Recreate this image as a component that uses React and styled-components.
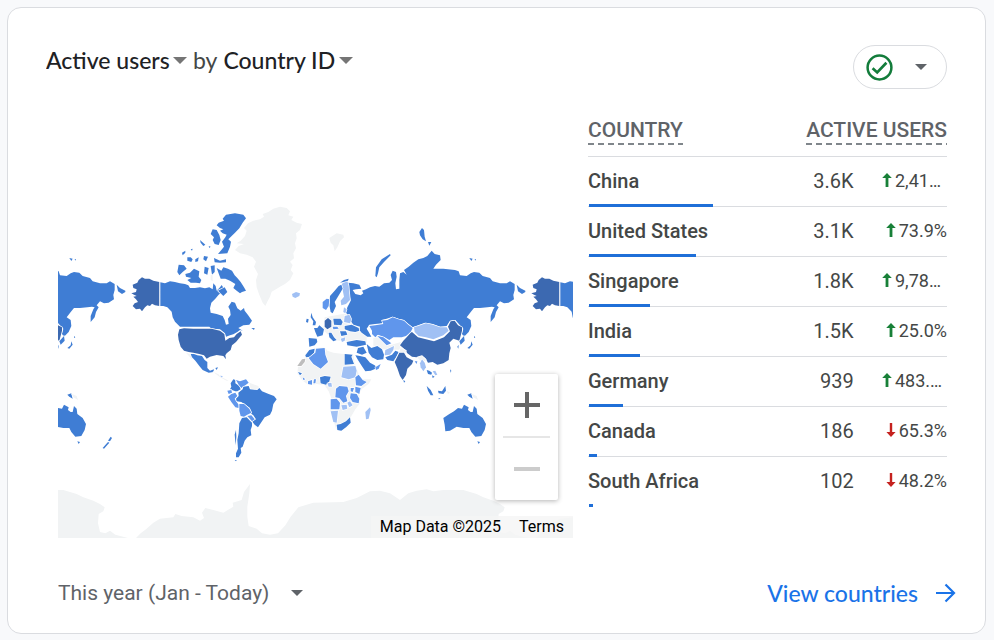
import React from 'react'
import styled, { createGlobalStyle } from 'styled-components'

const colors = {
  page: '#f8f9fb',
  white: '#ffffff',
  border: '#dadce0',
  ink: '#202124',
  text: '#444746',
  gray: '#5f6368',
  caret: '#757575',
  blue: '#1a73e8',
  bar: '#1f6fd8',
  green: '#188038',
  red: '#c5221f',
}

// map fills, from most users to none
const shades = {
  top: '#3c69b1',
  high: '#3f7dd4',
  mid: '#6096ec',
  low: '#a0c0f4',
  none: '#f1f3f4',
  unknown: '#bdbdbd',
}

const GlobalStyle = createGlobalStyle`
  *, *::before, *::after { box-sizing: border-box; }
  body {
    margin: 0;
    background-color: ${colors.page};
    font-family: Roboto, 'Liberation Sans', sans-serif;
    color: ${colors.text};
  }
`

const Page = styled.main`
  padding: 7px 8px 5px 7px;
`

const Card = styled.section`
  background-color: ${colors.white};
  border: 1px solid ${colors.border};
  border-radius: 14px;
  padding: 37px 29px 22px 38px;
`

const CardHeader = styled.header`
  display: flex;
  align-items: flex-start;
  justify-content: space-between;
  padding-right: 9px;
`

const Title = styled.h2`
  display: flex;
  align-items: center;
  gap: 6px;
  margin: 0;
  font-family: Lato, Roboto, sans-serif;
  font-size: 23px;
  font-weight: 400;
  line-height: 30px;
`

const Picker = styled.span`
  display: inline-flex;
  align-items: center;
  gap: ${(props) => props.$gap}px;
`

const Select = styled.select`
  appearance: none;
  border: 0;
  padding: 0;
  margin: 0;
  background: transparent;
  color: ${(props) => props.$color};
  font: inherit;
  font-weight: ${(props) => props.$weight || 400};
  line-height: inherit;
  cursor: pointer;
`

const StatusButton = styled.button`
  display: flex;
  align-items: center;
  justify-content: space-between;
  width: 94px;
  height: 44px;
  padding: 0 19px 0 12px;
  border: 1px solid ${colors.border};
  border-radius: 22px;
  background-color: ${colors.white};
  cursor: pointer;
`

const CardBody = styled.div`
  display: grid;
  grid-template-columns: minmax(0, 1fr) 359px;
  gap: 15px;
  align-items: start;
  padding: 21px 9px 0 12px;
`

const MapFrame = styled.div`
  position: relative;
  height: 428px;
  overflow: hidden;
`

const MapSvg = styled.svg`
  display: block;
  width: 100%;
  height: 100%;
`

const ZoomControl = styled.div`
  position: absolute;
  right: 15px;
  bottom: 38px;
  display: flex;
  flex-direction: column;
  align-items: center;
  width: 63px;
  background-color: ${colors.white};
  border-radius: 2px;
  box-shadow: 0 1px 5px rgba(0, 0, 0, 0.3);
`

const ZoomButton = styled.button`
  display: flex;
  align-items: center;
  justify-content: center;
  width: 100%;
  height: 62px;
  padding: 0;
  border: 0;
  background: transparent;
  color: ${(props) => (props.disabled ? '#cccccc' : '#666666')};
`

const ZoomDivider = styled.div`
  width: 47px;
  height: 2px;
  background-color: #e6e6e6;
`

const Attribution = styled.div`
  position: absolute;
  right: 0;
  bottom: 0;
  display: flex;
  color: #000000;
  font-size: 16px;
  line-height: 22px;
`

const AttributionItem = styled.span`
  padding: 0 9px;
  background-color: rgba(245, 245, 245, 0.8);
`

const TermsLink = styled.a`
  color: inherit;
  text-decoration: none;
`

const Table = styled.table`
  width: 100%;
  table-layout: fixed;
  border-spacing: 0;
  font-size: 20px;
`

const HeadCell = styled.th`
  height: 47px;
  padding: 8px 0 0;
  border-bottom: 1px solid ${colors.border};
  color: ${colors.gray};
  font-size: 21px;
  font-weight: 500;
  line-height: 24px;
  text-align: ${(props) => props.$align || 'left'};
  vertical-align: top;
`

const HeadLabel = styled.span`
  display: inline-block;
  padding-bottom: 3px;
  background: repeating-linear-gradient(90deg, #80868b 0 6px, transparent 6px 10px) left bottom / 100% 2px no-repeat;
`

const Cell = styled.td`
  height: 50px;
  padding: 0 0 2px;
  border-bottom: 1px solid ${(props) => (props.$last ? 'transparent' : colors.border)};
  text-align: right;
`

const CountryCell = styled(Cell).attrs({ as: 'th', scope: 'row' })`
  position: relative;
  font-weight: 500;
  text-align: left;
`

const Bar = styled.div`
  position: absolute;
  left: 1px;
  bottom: -1px;
  height: 3px;
  background-color: ${colors.bar};
`

const Change = styled.span`
  display: flex;
  align-items: center;
  justify-content: flex-end;
  gap: 3px;
  font-size: 18px;
`

const ChangeValue = styled.span`
  min-width: ${(props) => (props.$wide ? 52 : 0)}px;
  text-align: left;
`

const CardFooter = styled.footer`
  display: flex;
  align-items: center;
  justify-content: space-between;
  height: 36px;
  margin-top: 37px;
  padding-left: 12px;
  font-size: 21px;
`

const MoreLink = styled.a`
  display: flex;
  align-items: center;
  gap: 17px;
  color: ${colors.blue};
  font-family: Lato, Roboto, sans-serif;
  font-size: 23px;
  font-weight: 500;
  text-decoration: none;
`

const Caret = ({ width = 14, height = 7, color = colors.caret }) => (
  <svg width={width} height={height} viewBox='0 0 14 7' preserveAspectRatio='none' aria-hidden='true'>
    <path d='M0 0H14L7 7Z' fill={color} />
  </svg>
)

const CheckIcon = () => (
  <svg width='27' height='27' viewBox='0 0 27 27' fill='none' stroke='#137c3b' aria-hidden='true'>
    <circle cx='13.5' cy='13.5' r='11.9' strokeWidth='2.5' />
    <path d='M6.6 14.2L11.2 18.4L20.4 8.8' strokeWidth='2.7' />
  </svg>
)

const TrendIcon = ({ up }) => (
  <svg width='10' height='15' viewBox='0 0 10 15' aria-hidden='true'>
    <path
      d={up ? 'M5 0L9.8 5H6.4V14H3.6V5H.2Z' : 'M5 14L.4 9H3.8V0H6.2V9H9.6Z'}
      fill={up ? colors.green : colors.red}
    />
  </svg>
)

const ArrowIcon = () => (
  <svg width='21' height='20' viewBox='0 0 21 20' fill='none' stroke='currentColor' strokeWidth='2.2' aria-hidden='true'>
    <path d='M1 10H19M10.5 1.5L19 10L10.5 18.5' />
  </svg>
)

// Every sheet has its own origin on the map and is plotted at three units per pixel.
// A shape is [shade, points].
const SHEETS = [
  {
    x: 120,
    y: 200,
    shapes: [
      ['none', '384,70 400,62 420,58 432,50 428,42 445,36 460,26 480,20 500,24 510,34 505,46 520,50 514,60 530,68 546,72 540,90 528,100 530,115 525,130 528,145 520,160 522,175 510,185 518,195 512,210 520,220 510,240 495,252 480,260 468,268 455,275 450,290 442,305 436,318 428,308 418,285 410,262 408,240 414,222 402,200 408,185 398,172 380,164 360,160 345,150 356,138 372,132 350,130 362,122 375,108 380,92 372,84'],
      ['top', '66,232 75,236 88,236 100,242 118,246 118,318 105,316 96,311 90,318 82,316 75,322 66,334 60,326 48,328 38,318 44,310 54,306 48,298 40,290 50,288 42,284 34,280 48,276 50,268 40,264 38,254 52,248 56,240'],
      ['high', '121,247 135,250 150,244 165,246 180,250 195,252 205,256 210,264 225,264 240,262 255,265 268,262 278,268 280,250 287,258 290,272 300,262 305,255 312,266 306,276 296,284 286,296 274,308 270,325 272,338 290,342 308,348 314,360 318,374 326,372 324,356 332,345 330,330 325,320 335,305 345,308 352,325 362,332 372,324 374,332 384,345 396,362 388,374 370,376 355,384 368,392 360,390 352,396 340,403 330,406 318,410 315,400 300,388 275,386 268,380 180,380 165,365 158,352 155,335 142,322 130,318 121,318'],
      ['high', '318,44 345,40 370,44 378,55 368,68 358,85 345,98 335,108 325,118 333,125 330,140 322,160 294,162 304,150 312,140 306,125 316,112 320,104 308,100 300,92 310,88 300,84 290,76 296,68 312,62 308,56'],
      ['high', '278,88 290,90 298,105 302,120 296,135 284,132 278,120 282,112 272,102'],
      ['high', '282,174 300,182 318,178 318,187 300,188 284,187'],
      ['high', '196,222 210,218 222,206 238,214 236,230 244,240 240,250 228,248 212,248 202,240 214,234 198,230'],
      ['high', '176,194 192,196 200,206 188,216 178,226 172,216'],
      ['high', '202,172 212,172 218,178 214,186 202,182'],
      ['high', '226,178 236,172 234,184 226,186'],
      ['high', '186,158 196,152 196,158 188,166'],
      ['high', '212,148 218,146 216,152'],
      ['high', '240,120 256,134 250,138 242,128'],
      ['high', '252,168 264,170 258,184 250,178'],
      ['high', '266,138 272,140 268,144'],
      ['high', '254,200 266,204 262,224 252,220'],
      ['high', '272,198 284,196 284,216 276,224'],
      ['none', '272,224 278,226 278,244 272,240'],
      ['high', '290,204 304,212 310,202 324,206 336,212 344,226 352,234 362,246 372,262 378,272 366,276 360,280 350,272 340,264 346,252 330,242 316,236 302,236 298,226'],
      ['high', '294,272 314,262 322,276 310,288'],
      ['high', '394,384 404,384 402,390'],
      ['low', '516,282 528,276 540,280 538,288 526,294 518,290'],
    ],
  },
  {
    x: 170,
    y: 320,
    shapes: [
      ['top', '28,28 42,25 70,26 95,26 125,26 150,32 163,42 166,62 178,54 192,52 200,42 212,34 216,44 206,56 198,66 186,76 182,90 170,100 166,106 168,118 160,108 140,105 120,110 110,116 102,106 88,102 70,98 56,96 42,92 32,80 26,60 24,44'],
      ['none', '48,98 60,102 72,118 64,116'],
      ['high', '62,102 72,102 82,106 96,108 104,120 112,126 112,144 120,152 132,148 130,156 116,158 98,150 88,138 76,122 66,112'],
      ['high', '136,144 144,142 140,150'],
      ['none', '130,156 144,162 160,174 176,182 170,182 150,172'],
      ['low', '150,167 158,168 156,173'],
      ['none', '238,188 265,198 268,208 242,206'],
      ['high', '182,190 190,178 196,180 196,190 208,198 212,208 202,214 196,214 180,208 184,200'],
      ['mid', '198,180 210,184 228,178 236,188 226,196 214,204 206,194'],
      ['mid', '172,212 184,210 186,218 176,222'],
      ['mid', '184,222 196,218 202,228 194,236 200,246 206,254 206,264 196,262 184,246 174,230'],
      ['high', '205,218 218,208 220,200 236,198 240,208 262,210 268,204 276,214 296,222 312,228 320,238 310,252 306,272 300,284 284,292 272,310 264,322 254,314 246,304 258,298 250,286 242,280 240,264 226,254 214,246 200,244 198,236 206,228'],
      ['mid', '208,252 222,252 238,266 244,278 232,284 222,290 212,288 208,272'],
      ['mid', '232,288 244,286 254,298 246,304'],
      ['high', '216,294 230,292 240,302 246,308 246,318 242,330 244,346 232,352 224,362 218,380 212,384 214,398 206,412 198,412 198,400 204,386 202,360 206,340 208,310'],
      ['high', '194,344 198,330 199,350 197,376'],
      ['high', '194,420 200,420 198,424'],
    ],
  },
  {
    x: 290,
    y: 230,
    shapes: [
      ['none', '118,24 140,10 160,14 162,22 150,34 142,52 134,64 130,46 122,38'],
      ['none', '104,262 170,250 230,300 230,340 130,330 100,300'],
      ['high', '174,158 190,160 208,164 214,176 198,178 188,180 196,192 212,196 220,190 216,182 228,178 240,172 255,168 268,170 282,160 298,158 306,150 302,135 308,122 318,126 320,140 316,160 318,178 328,176 328,150 330,130 340,126 350,134 342,120 356,110 370,98 385,88 400,84 412,78 425,62 434,72 450,76 452,90 438,104 430,116 460,116 495,120 506,124 510,136 530,138 542,130 552,126 568,128 578,138 600,144 608,154 630,160 650,160 660,154 674,162 674,180 670,195 672,208 656,218 642,220 630,214 620,226 626,232 618,246 614,262 602,276 602,258 610,238 614,232 606,230 592,232 570,234 552,234 544,244 530,262 542,270 544,288 536,306 522,320 516,312 520,296 510,286 496,270 480,272 470,288 450,290 425,282 405,278 380,288 368,292 355,282 340,270 325,266 308,260 290,266 275,270 278,280 255,282 238,284 230,296 236,306 244,320 232,320 215,308 208,300 210,290 190,284 182,272 178,260 168,248 172,232 176,224 182,212 178,190 176,170'],
      ['high', '680,164 690,174 706,182 706,186 696,192 684,184'],
      ['high', '256,138 258,112 275,88 300,72 302,76 282,96 268,112 264,130 260,142'],
      ['high', '388,6 396,-6 402,0 404,20 408,34 398,28 390,16'],
      ['high', '414,36 424,36 418,47'],
      ['high', '538,84 548,86 544,93'],
      ['high', '554,87 558,88 556,92'],
      ['low', '160,156 172,152 176,168 178,190 180,210 168,222 154,226 152,212 162,200 158,180 154,166'],
      ['high', '154,164 158,176 150,190 140,206 134,216 138,228 128,250 122,246 118,225 120,198 134,182 146,168'],
      ['mid', '98,216 110,206 118,208 116,228 108,240 98,234'],
      ['high', '150,158 162,150 176,146 174,152 160,156'],
      ['low', '162,232 170,238 166,250 160,246'],
      ['low', '164,258 178,254 184,268 180,280 162,276'],
      ['top', '104,272 114,264 124,272 124,290 112,298 104,290'],
      ['high', '130,266 152,266 158,276 154,286 132,284'],
      ['high', '164,288 185,284 206,294 208,302 196,306 180,304 164,298'],
      ['high', '72,294 82,294 88,286 102,298 98,316 82,320 76,306'],
      ['high', '56,324 80,326 82,336 74,346 58,350'],
      ['high', '64,248 68,262 78,276 76,286 68,286 70,274 62,262'],
      ['high', '50,266 56,268 54,278 48,276'],
      ['high', '116,308 124,308 132,322 140,330 130,334 118,322'],
      ['mid', '128,290 142,290 146,296 130,298'],
      ['high', '150,304 168,304 172,314 154,318'],
      ['low', '152,326 166,322 164,332 156,336'],
      ['high', '170,336 200,330 226,334 228,344 200,350 172,346'],
      ['none', '250,324 262,322 300,346 340,334 340,360 250,356'],
      ['mid', '238,288 256,286 280,282 276,272 292,270 308,262 325,268 342,272 355,284 368,294 362,306 348,318 335,322 310,322 298,330 284,322 264,314 256,322 246,312 246,302'],
      ['mid', '262,318 280,322 296,334 304,340 290,346 274,330'],
      ['low', '372,292 385,288 408,280 428,284 450,292 470,292 476,302 460,316 430,328 408,322 386,318 374,306'],
      ['top', '366,306 384,322 408,328 432,334 462,322 480,304 474,290 482,274 494,272 504,286 516,292 516,302 508,332 490,326 478,338 482,354 478,370 476,390 460,400 442,404 428,396 414,398 406,384 396,378 380,382 366,380 352,370 344,358 330,346 340,332 350,322 362,308'],
      ['high', '522,318 508,334 512,344 524,332'],
      ['high', '544,334 548,344 538,356 532,354 542,346'],
      ['high', '502,350 506,344 505,356'],
      ['high', '552,318 556,322 552,324'],
    ],
  },
  {
    x: 290,
    y: 320,
    shapes: [
      ['none', '46,110 74,84 104,82 112,92 130,98 160,102 190,106 194,130 206,162 216,178 244,178 236,192 216,206 208,222 210,250 196,268 182,292 176,318 150,334 138,326 130,300 120,270 126,240 116,214 104,196 80,192 56,196 36,180 22,160 24,140'],
      ['high', '46,106 58,90 74,86 72,98 60,110 48,112'],
      ['unknown', '22,138 36,118 46,116 44,126 34,138'],
      ['mid', '56,114 76,98 78,86 104,84 106,104 114,126 92,146 70,132'],
      ['high', '164,102 188,104 184,110 192,132 164,134'],
      ['low', '160,140 196,138 200,152 196,172 176,178 154,172'],
      ['mid', '196,172 206,164 218,180 230,186 214,198 198,196'],
      ['high', '90,172 104,168 122,170 118,184 108,194 92,190'],
      ['low', '112,190 124,188 126,200 116,200'],
      ['mid', '138,206 148,198 172,200 176,214 168,228 172,244 160,248 148,234 136,232'],
      ['mid', '196,200 212,204 208,222 196,216'],
      ['mid', '182,204 192,204 188,216 182,214'],
      ['mid', '182,220 200,222 208,236 206,250 188,246 180,234'],
      ['mid', '122,238 140,236 150,248 148,268 122,268'],
      ['low', '154,256 170,254 172,266 158,270'],
      ['low', '172,248 180,244 188,256 178,262'],
      ['low', '122,274 144,272 142,290 140,308 130,306'],
      ['high', '140,314 152,312 168,304 180,292 182,308 168,322 154,332 142,330'],
      ['low', '226,276 240,262 242,270 236,296 228,298'],
      ['mid', '54,184 66,180 66,194 54,192'],
      ['mid', '72,178 78,178 76,190 70,190'],
      ['high', '24,156 36,160 30,166'],
      ['mid', '38,172 46,178 40,180'],
      ['high', '196,106 210,108 226,112 240,128 254,136 262,144 242,152 226,154 214,136 204,120'],
      ['mid', '256,142 272,132 266,146 258,150'],
      ['high', '204,84 220,80 230,98 216,104 200,98'],
      ['high', '230,72 244,84 262,78 276,88 282,104 280,118 262,120 246,112 236,98'],
      ['low', '286,90 312,78 310,90 300,104 284,106'],
      ['high', '286,112 306,104 316,92 326,96 318,112 310,124 292,120'],
      ['none', '332,84 348,92 346,102 328,96'],
      ['top', '322,110 328,98 342,98 350,112 370,122 366,132 352,146 348,165 338,180 330,168 322,145 314,126'],
      ['mid', '374,124 382,124 380,132'],
      ['none', '382,112 396,108 408,120 396,128'],
      ['low', '396,118 404,128 408,142 400,154 392,142 390,130'],
      ['high', '340,180 346,184 342,188'],
    ],
  },
  {
    x: 400,
    y: 330,
    shapes: [
      ['high', '80,120 88,122 96,128 94,134 84,132'],
      ['high', '96,136 104,140 98,144'],
      ['low', '98,124 106,122 112,134 106,136'],
      ['high', '80,168 92,180 100,196 92,196 84,182'],
      ['high', '114,182 126,184 136,168 138,182 130,192 116,190'],
      ['none', '140,182 150,188 144,192'],
      ['high', '150,118 154,122 152,128'],
      ['high', '116,204 122,206 116,208'],
      ['high', '202,194 214,190 218,206 208,200'],
      ['none', '216,192 230,198 234,210 220,202'],
      ['high', '130,264 148,252 162,244 174,234 186,236 192,224 206,232 204,240 212,246 218,246 222,228 230,236 232,252 248,264 258,282 254,300 244,318 226,320 214,306 208,294 190,294 170,290 150,302 136,304 134,284'],
      ['high', '232,334 240,336 236,342'],
      ['high', '332,320 336,324 330,334 324,332'],
      ['high', '324,336 328,338 312,356 308,354'],
    ],
  },
  {
    x: 50,
    y: 470,
    shapes: [
      ['none', '258,204 272,190 288,178 310,158 330,146 370,142 376,132 395,138 430,142 450,152 462,144 456,128 466,114 490,120 520,128 550,110 548,98 575,90 582,66 600,42 598,70 592,110 592,140 596,168 620,176 636,190 660,194 684,190 706,166 722,140 745,112 790,98 880,96 920,84 960,64 990,62 1020,70 1050,90 1075,70 1100,62 1130,58 1150,64 1180,60 1240,60 1260,66 1280,72 1300,82 1330,92 1350,102 1364,112 1360,124 1346,132 1344,160 1350,186 1366,190 1380,182 1396,194 1434,204'],
    ],
  },
]

const MAP_PERIOD = 400

// the stroke lies under each fill, so a border only cuts into the neighbours
const World = () => (
  <g id='world' stroke={colors.white} strokeWidth='4' strokeLinejoin='round' paintOrder='stroke'>
    {SHEETS.map((sheet) => (
      <g key={`${sheet.x}-${sheet.y}`} transform={`translate(${sheet.x} ${sheet.y}) scale(0.33333)`}>
        {sheet.shapes.map(([shade, points]) => (
          <polygon key={points} points={points} fill={shades[shade]} />
        ))}
      </g>
    ))}
  </g>
)

const WorldMap = () => (
  <MapFrame>
    <MapSvg viewBox='58 110 515 428' preserveAspectRatio='xMidYMax slice' role='img' aria-label='Active users by country'>
      <World />
      <use href='#world' x={-MAP_PERIOD} />
      <use href='#world' x={MAP_PERIOD} />
    </MapSvg>
    <ZoomControl>
      <ZoomButton type='button' aria-label='Zoom in'>
        <svg width='26' height='26' viewBox='0 0 26 26' aria-hidden='true'>
          <path d='M11 0H15V11H26V15H15V26H11V15H0V11H11Z' fill='currentColor' />
        </svg>
      </ZoomButton>
      <ZoomDivider />
      <ZoomButton type='button' aria-label='Zoom out' disabled>
        <svg width='26' height='4' viewBox='0 0 26 4' aria-hidden='true'>
          <path d='M0 0H26V4H0Z' fill='currentColor' />
        </svg>
      </ZoomButton>
    </ZoomControl>
    <Attribution>
      <AttributionItem>Map Data ©2025</AttributionItem>
      <AttributionItem><TermsLink href='#terms'>Terms</TermsLink></AttributionItem>
    </Attribution>
  </MapFrame>
)

const ROWS = [
  { country: 'China', users: '3.6K', up: true, change: '2,41…', share: 63 },
  { country: 'United States', users: '3.1K', up: true, change: '73.9%', share: 54 },
  { country: 'Singapore', users: '1.8K', up: true, change: '9,78…', share: 31 },
  { country: 'India', users: '1.5K', up: true, change: '25.0%', share: 26 },
  { country: 'Germany', users: '939', up: true, change: '483.…', share: 17 },
  { country: 'Canada', users: '186', up: false, change: '65.3%', share: 4 },
  { country: 'South Africa', users: '102', up: false, change: '48.2%', share: 2 },
]

const CountryTable = () => (
  <Table>
    <colgroup>
      <col style={{ width: '55%' }} />
      <col style={{ width: '19%' }} />
      <col style={{ width: '26%' }} />
    </colgroup>
    <thead>
      <tr>
        <HeadCell scope='col'><HeadLabel>COUNTRY</HeadLabel></HeadCell>
        <HeadCell scope='colgroup' colSpan={2} $align='right'><HeadLabel>ACTIVE USERS</HeadLabel></HeadCell>
      </tr>
    </thead>
    <tbody>
      {ROWS.map((row, index) => {
        const last = index === ROWS.length - 1
        return (
          <tr key={row.country}>
            <CountryCell $last={last}>
              {row.country}
              <Bar style={{ width: `${row.share}%` }} />
            </CountryCell>
            <Cell $last={last}>{row.users}</Cell>
            <Cell $last={last}>
              <Change>
                <TrendIcon up={row.up} />
                <ChangeValue $wide={row.change.endsWith('…')}>{row.change}</ChangeValue>
              </Change>
            </Cell>
          </tr>
        )
      })}
    </tbody>
  </Table>
)

export default function App() {
  return (
    <Page>
      <GlobalStyle />
      <Card>
        <CardHeader>
          <Title>
            <Picker $gap={3}>
              <Select aria-label='Metric' $color={colors.ink} $weight={500}>
                <option>Active users</option>
              </Select>
              <Caret />
            </Picker>
            <span>by</span>
            <Picker $gap={3}>
              <Select aria-label='Dimension' $color={colors.ink} $weight={500}>
                <option>Country ID</option>
              </Select>
              <Caret />
            </Picker>
          </Title>
          <StatusButton type='button' aria-label='Data quality'>
            <CheckIcon />
            <Caret width={12} height={6} color={colors.gray} />
          </StatusButton>
        </CardHeader>
        <CardBody>
          <WorldMap />
          <CountryTable />
        </CardBody>
        <CardFooter>
          <Picker $gap={21}>
            <Select aria-label='Date range' $color={colors.gray}>
              <option>This year (Jan - Today)</option>
            </Select>
            <Caret width={12} height={6} color={colors.gray} />
          </Picker>
          <MoreLink href='#countries'>
            View countries
            <ArrowIcon />
          </MoreLink>
        </CardFooter>
      </Card>
    </Page>
  )
}
